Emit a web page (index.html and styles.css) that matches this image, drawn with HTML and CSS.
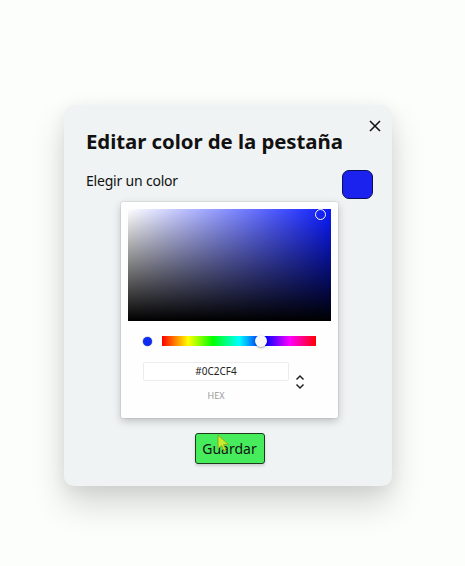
FILE: index.html
```html
<!DOCTYPE html>
<html lang="es">
<head>
<meta charset="utf-8">
<title>Editar color de la pestaña</title>
<link rel="stylesheet" href="styles.css">
</head>
<body>
<div class="stage">
  <div class="modal">
    <button class="close" aria-label="Cerrar">
      <svg width="12" height="12" viewBox="0 0 12 12"><path d="M1 1 L11 11 M11 1 L1 11" stroke="#111" stroke-width="1.5" fill="none"/></svg>
    </button>
    <h1 class="title">Editar color de la pestaña</h1>
    <div class="choose-row">
      <span class="choose-label">Elegir un color</span>
      <span class="swatch"></span>
    </div>
    <div class="picker">
      <div class="sat">
        <span class="sat-handle"></span>
      </div>
      <div class="hue-row">
        <span class="preview-dot"></span>
        <div class="hue">
          <span class="hue-thumb" style="left: 64%"></span>
        </div>
      </div>
      <div class="input-row">
        <div class="field">
          <div class="hex-input">#0C2CF4</div>
          <div class="hex-label">HEX</div>
        </div>
        <div class="toggle">
          <svg width="10" height="16" viewBox="0 0 10 16"><path d="M1.5 5.5 L5 2 L8.5 5.5 M1.5 10.5 L5 14 L8.5 10.5" stroke="#222" stroke-width="1.5" fill="none"/></svg>
        </div>
      </div>
    </div>
    <div class="actions">
      <button class="save">Guardar</button>
    </div>
    <svg class="cursor" width="14" height="20" viewBox="0 0 14 20"><path d="M1 1 L1 15 L4.5 11.5 L7 17 L9 16 L6.6 10.6 L11.5 10.6 Z" fill="#d9ec2a" stroke="#8a9a10" stroke-width="0.8" opacity="0.9"/></svg>
  </div>
</div>
</body>
</html>
```
FILE: styles.css
```css
html, body {
  margin: 0;
  padding: 0;
  min-height: 100%;
  background: #fcfefb;
  font-family: "Noto Sans", "Open Sans", sans-serif;
  color: #111;
}

html {
  height: 100%;
}

.stage {
  min-height: 566px;
  box-sizing: border-box;
  padding: 105px 0 60px 64px;
}

.modal {
  position: relative;
  width: 328px;
  box-sizing: border-box;
  padding: 22px 19px 22px 22px;
  background: #eff3f3;
  border-radius: 10px;
  box-shadow: 0 18px 34px rgba(0, 0, 0, 0.16), 0 4px 16px rgba(0, 0, 0, 0.06);
  display: flex;
  flex-direction: column;
}

.close {
  position: absolute;
  top: 14px;
  right: 11px;
  width: 13px;
  height: 13px;
  padding: 0;
  border: none;
  background: transparent;
  display: flex;
  align-items: center;
  justify-content: center;
}

.title {
  margin: 0;
  font-size: 20.4px;
  line-height: 28px;
  font-weight: 700;
  letter-spacing: -0.05px;
}

.choose-row {
  margin-top: 15px;
  display: flex;
  align-items: center;
  justify-content: space-between;
  height: 28px;
}

.choose-label {
  font-size: 14px;
  line-height: 20px;
  margin-top: -6px;
  letter-spacing: -0.2px;
}

.swatch {
  width: 29px;
  height: 27px;
  border: 1px solid #0b0f55;
  border-radius: 7px;
  background: #1c22ee;
}

.picker {
  align-self: center;
  margin: 4px 0 0 0;
  width: 217px;
  height: 216px;
  box-sizing: border-box;
  padding: 7px;
  background: #fefefe;
  border-radius: 2px;
  box-shadow: 0 0 0 1px rgba(0, 0, 0, 0.05), 0 3px 8px rgba(0, 0, 0, 0.22);
  display: flex;
  flex-direction: column;
}

.sat {
  position: relative;
  height: 112px;
  background:
    linear-gradient(to top, #000 0%, rgba(0, 0, 0, 0) 100%),
    linear-gradient(to right, #fff 0%, hsl(236, 100%, 52%) 100%);
}

.sat-handle {
  position: absolute;
  top: 0px;
  right: 5px;
  width: 9px;
  height: 9px;
  border: 1.5px solid #fff;
  border-radius: 50%;
  box-shadow: 0 0 1px rgba(0, 0, 0, 0.4);
}

.hue-row {
  margin-top: 14px;
  padding: 0 15px;
  display: flex;
  align-items: center;
  height: 12px;
}

.preview-dot {
  width: 9px;
  height: 9px;
  border-radius: 50%;
  background: #0c2cf4;
  box-shadow: 0 0 0 0.5px rgba(0, 0, 0, 0.3);
  margin-right: 10px;
}

.hue {
  position: relative;
  flex: 1;
  height: 10px;
  background: linear-gradient(to right, #f00 0%, #ff0 17%, #0f0 33%, #0ff 50%, #00f 67%, #f0f 83%, #f00 100%);
}

.hue-thumb {
  position: absolute;
  top: -1px;
  width: 12px;
  height: 12px;
  margin-left: -6px;
  border-radius: 50%;
  background: #f8f8f8;
  box-shadow: 0 1px 2px rgba(0, 0, 0, 0.35);
}

.input-row {
  margin-top: 15px;
  padding-left: 15px;
  display: flex;
  align-items: flex-start;
}

.field {
  display: flex;
  flex-direction: column;
  align-items: center;
}

.hex-input {
  width: 146px;
  height: 19px;
  box-sizing: border-box;
  border: 1px solid #ececec;
  border-radius: 2px;
  background: #fff;
  font-size: 10px;
  line-height: 17px;
  text-align: center;
  color: #222;
}

.hex-label {
  margin-top: 9px;
  font-size: 9px;
  line-height: 12px;
  color: #999;
}

.toggle {
  margin: 12px 0 0 6px;
  width: 10px;
  height: 16px;
  display: flex;
}

.actions {
  margin-top: 15px;
  display: flex;
  justify-content: center;
}

.save {
  width: 70px;
  height: 31px;
  padding: 0;
  border: 1px solid #1d3a1d;
  border-radius: 3px;
  background: #46ec5c;
  font-family: "Noto Sans", "Open Sans", sans-serif;
  font-size: 14px;
  color: #111;
  box-shadow: 0 2px 3px rgba(0, 0, 0, 0.15);
}

.cursor {
  position: absolute;
  left: 153px;
  top: 329px;
}
```
